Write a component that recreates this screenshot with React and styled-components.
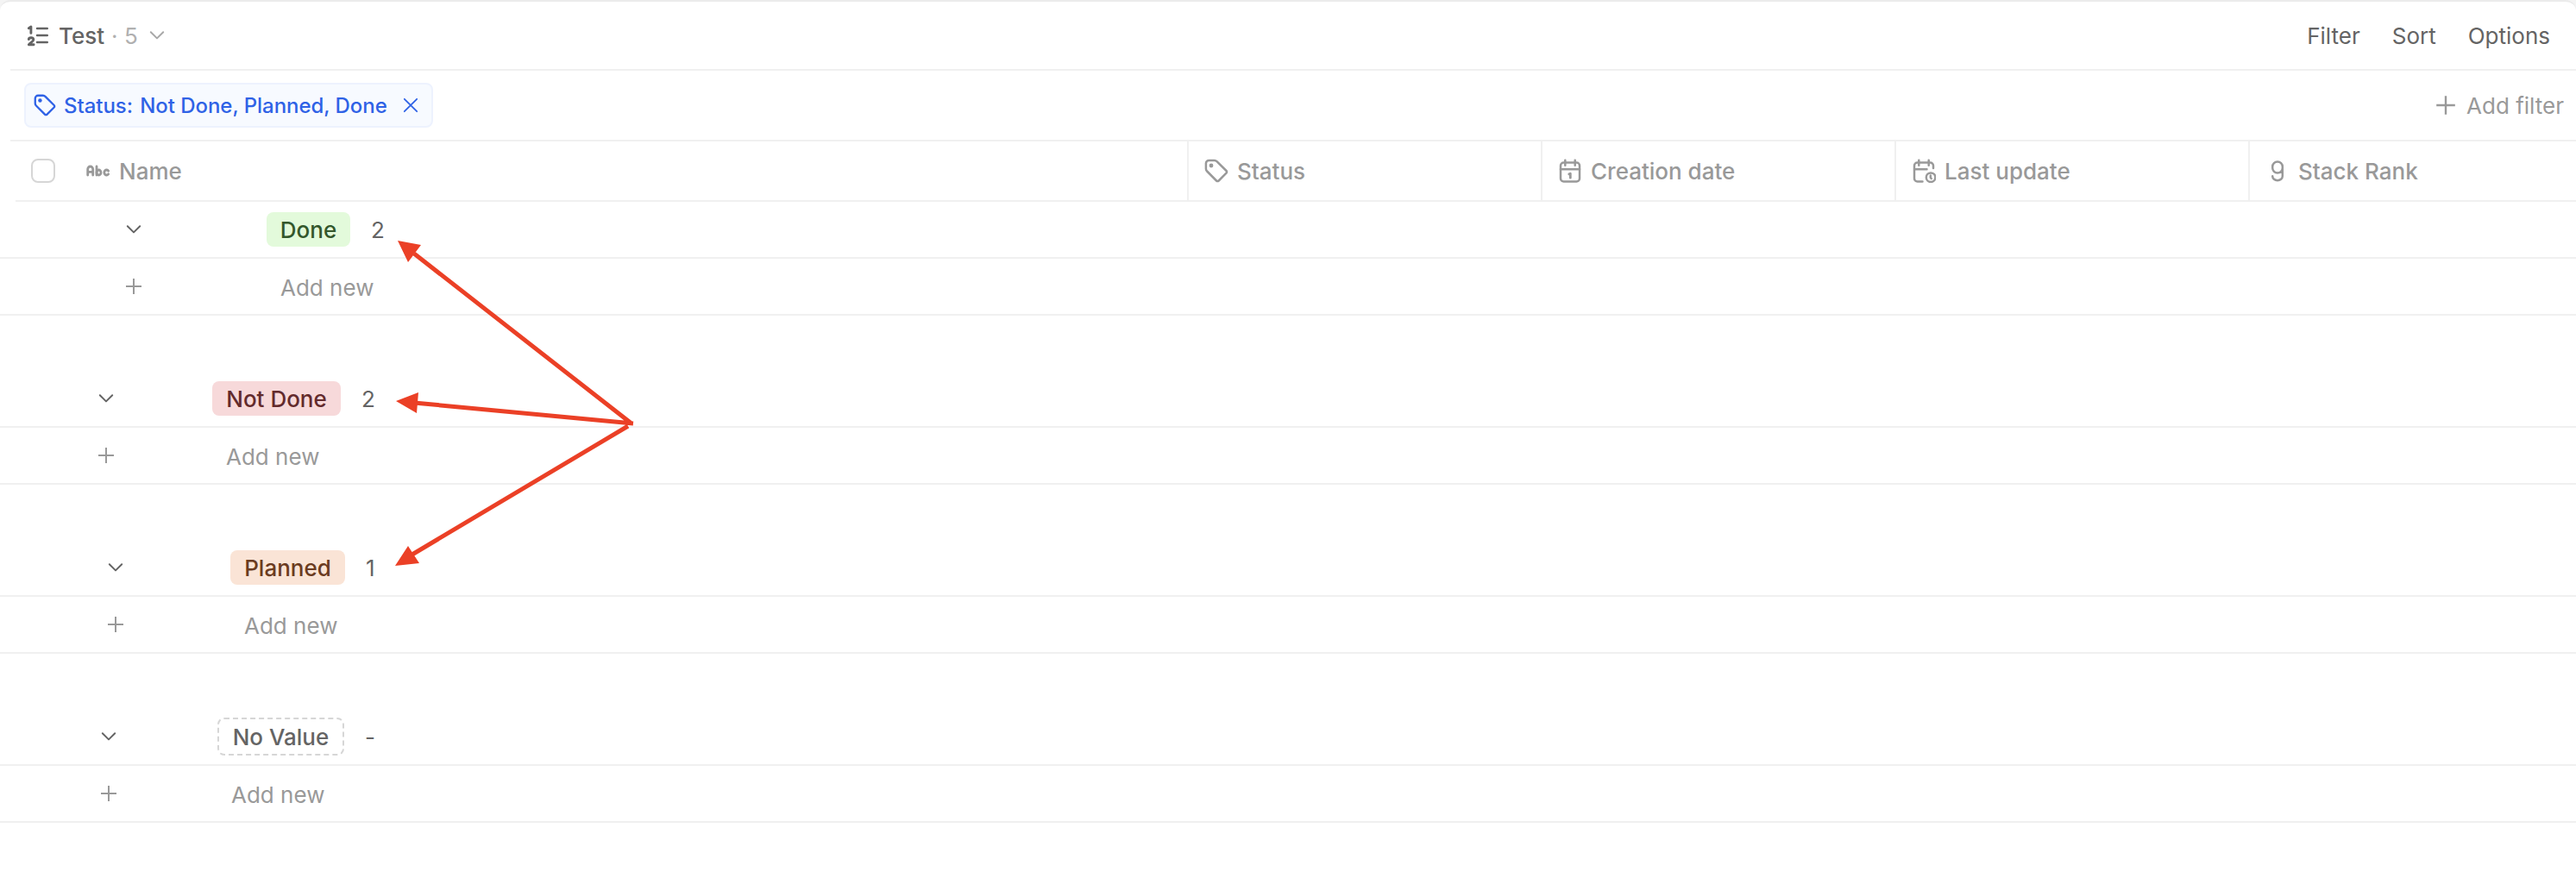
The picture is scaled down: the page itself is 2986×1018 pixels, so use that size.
import React from "react";
import styled, { createGlobalStyle } from "styled-components";

const GlobalStyle = createGlobalStyle`
  * { box-sizing: border-box; }
  body { margin: 0; background: #f4f4f4; font-family: Inter, sans-serif; }
`;

const Page = styled.div`
  position: relative;
  width: 2986px;
  height: 1018px;
  overflow: hidden;
  background: #fff;
  border-top: 2px solid #ebebeb;
  border-radius: 12px 12px 0 0;
  font-size: 26px;
  line-height: 40px;
  color: #646464;
`;

// Inter sits a little high in its line box
const Label = styled.span`
  padding-top: 2px;
  white-space: nowrap;
`;

const Toolbar = styled.header`
  display: flex;
  align-items: center;
  height: 80px;
  margin-left: 12px;
  padding: 0 30px 0 19px;
  border-bottom: 2px solid #f0f0f0;
`;

const ViewName = styled(Label)`
  margin-left: 11px;
  font-weight: 500;
`;

const ViewCount = styled(Label)`
  width: 43px;
  margin-left: 8px;
  color: #b0b0b0;
`;

const ViewMenu = styled.span`
  display: flex;
  color: #a8a8a8;
`;

const Actions = styled.nav`
  display: flex;
  gap: 37px;
  margin-left: auto;
`;

const FilterBar = styled.div`
  display: flex;
  align-items: center;
  height: 82px;
  margin-left: 12px;
  padding: 0 14px 0 16px;
  border-bottom: 2px solid #f0f0f0;
`;

const FilterChip = styled.div`
  display: flex;
  align-items: center;
  width: 474px;
  height: 52px;
  padding-left: 9px;
  border: 2px solid #edf2fe;
  border-radius: 8px;
  background: #f7faff;
  color: #2f62e6;
  font-size: 24px;
  font-weight: 500;
`;

const ChipText = styled(Label)`
  width: 375px;
  margin: 0 17px 0 9px;
  letter-spacing: -0.05px;
`;

const ChipField = styled.span`
  margin-right: 2px;
`;

const AddFilter = styled.div`
  display: flex;
  align-items: center;
  gap: 12px;
  margin-left: auto;
  color: #999;
`;

const HeaderRow = styled.div`
  display: flex;
  height: 70px;
  margin-left: 18px;
  border-bottom: 2px solid #f0f0f0;
  color: #999;
  font-weight: 500;
`;

const HeaderCell = styled.div`
  display: flex;
  align-items: center;
  flex: none;
  gap: 10px;
  width: ${(props) => props.$width}px;
  padding-left: 18px;
  border-left: ${(props) => (props.$first ? "none" : "2px solid #f0f0f0")};
`;

const Checkbox = styled.span`
  width: 28px;
  height: 28px;
  margin-right: 26px;
  border: 2px solid #d6d6d6;
  border-radius: 8px;
`;

const Group = styled.section`
  margin-bottom: 64px;
`;

const Row = styled.div`
  display: flex;
  align-items: center;
  height: 66px;
  padding-left: ${(props) => props.$indent}px;
  border-bottom: 2px solid #f0f0f0;
`;

const AddRow = styled(Row)`
  color: #999;
`;

const AddLabel = styled.span`
  margin-left: ${(props) => props.$gap}px;
  padding-top: 4px;
`;

const Badge = styled.span`
  display: flex;
  align-items: center;
  justify-content: center;
  width: ${(props) => props.$width}px;
  height: ${(props) => (props.$dashed ? 44 : 40)}px;
  margin-left: ${(props) => props.$gap}px;
  border: ${(props) => (props.$dashed ? "2px dashed #d6d6d6" : "none")};
  border-radius: 8px;
  background: ${(props) => props.$bg};
  color: ${(props) => props.$color};
  font-weight: 500;
`;

const Count = styled(Label)`
  margin-left: 24px;
`;

const Arrows = styled.svg`
  position: absolute;
  left: 450px;
  top: 268px;
`;

function Icon({ size = 28, box = size, width = 2, children }) {
  return (
    <svg width={size} height={size} viewBox={`0 0 ${box} ${box}`} fill="none" stroke="currentColor" strokeWidth={width} strokeLinecap="round" strokeLinejoin="round">
      {children}
    </svg>
  );
}

const Chevron = () => <Icon size={20}><path d="M2.8 6.2l7.2 7.2 7.2-7.2" /></Icon>;

const Plus = ({ size = 20, width = 2 }) => (
  <Icon size={size} box={20} width={width}><path d="M10 1v18M1 10h18" strokeLinecap="butt" /></Icon>
);

const Tag = ({ size = 28 }) => (
  <Icon size={size} box={28} width={2.5}>
    <path d="M1.9 5.5a3.6 3.6 0 0 1 3.6-3.6h6.2a4 4 0 0 1 2.8 1.2l11 10.900a1.9 1.9 0 0 1 0 2.7l-8.8 8.8a1.9 1.9 0 0 1-2.7 0l-10.900-11a4 4 0 0 1-1.2-2.8z" />
    <circle cx="8" cy="8" r="2.4" fill="currentColor" stroke="none" />
  </Icon>
);

const Calendar = () => (
  <Icon width={2.5}>
    <rect x="3" y="4.5" width="22" height="22" rx="3.5" />
    <path d="M3 12.3h22M8.3 1.8v6M19.7 1.8v6" />
    <path d="M12.8 17.9l1.5-.6v4.900" strokeWidth="2.8" />
  </Icon>
);

const CalendarClock = () => (
  <Icon width={2.5}>
    <path d="M12.5 26.500H6.5a3.5 3.5 0 0 1-3.5-3.500V8a3.5 3.5 0 0 1 3.5-3.500h15a3.5 3.5 0 0 1 3.5 3.500v3M3 12.300h14.500M8.300 1.800v6M19.700 1.800v6" />
    <circle cx="22.1" cy="21.7" r="5.3" />
    <path d="M21.800 19.500v2.300l.9 1.200" />
  </Icon>
);

const groups = [
  { name: "Done", count: "2", indent: 145, badge: 97, gap: 144, bg: "#e3fadb", color: "#33572b" },
  { name: "Not Done", count: "2", indent: 113, badge: 149, gap: 113, bg: "#f7d9da", color: "#632a2c" },
  { name: "Planned", count: "1", indent: 124, badge: 133, gap: 123, bg: "#fae4d6", color: "#6b3b20" },
  { name: "No Value", count: "-", indent: 116, badge: 147, gap: 116, bg: "#fff", color: "#646464", dashed: true },
];

export default function App() {
  return (
    <Page>
      <GlobalStyle />
      <Toolbar>
        <Icon size={26} width={2.4}>
          <path d="M12 5h11.8M12 13h11.8M12 21h11.8" />
          <path d="M2.3 4.7l2.6-1.6v7.3M2.3 17.6c.3-2.7 5.5-2.5 5.5.4 0 2-3.2 3.2-5.4 5.8h5.7" strokeWidth="2.9" />
        </Icon>
        <ViewName>Test</ViewName>
        <ViewCount>· 5</ViewCount>
        <ViewMenu><Chevron /></ViewMenu>
        <Actions>
          <Label>Filter</Label>
          <Label>Sort</Label>
          <Label>Options</Label>
        </Actions>
      </Toolbar>
      <FilterBar>
        <FilterChip>
          <Tag size={26} />
          <ChipText><ChipField>Status:</ChipField> Not Done, Planned, Done</ChipText>
          <Icon size={20} width={1.8}><path d="M2.8 2.8l14.4 14.4M17.2 2.8L2.8 17.2" /></Icon>
        </FilterChip>
        <AddFilter>
          <Plus size={24} />
          <Label>Add filter</Label>
        </AddFilter>
      </FilterBar>
      <HeaderRow>
        <HeaderCell $first $width={1358}>
          <Checkbox />
          <Icon width={2.8}>
            <path d="M1.7 19v-7a3 3 0 0 1 6 0v7M1.7 15.3h6M12 9v10" />
            <ellipse cx="14.5" cy="16" rx="2.5" ry="3" />
            <path d="M25.7 14.2a2.7 3 0 1 0 0 3.6" />
          </Icon>
          <Label>Name</Label>
        </HeaderCell>
        <HeaderCell $width={410}><Tag /><Label>Status</Label></HeaderCell>
        <HeaderCell $width={410}><Calendar /><Label>Creation date</Label></HeaderCell>
        <HeaderCell $width={410}><CalendarClock /><Label>Last update</Label></HeaderCell>
        <HeaderCell $width={410}>
          <Icon width={2.5}>
            <path d="M19.8 9.3a5.8 5.8 0 0 0-11.6 0v1.4a5.8 5.8 0 0 0 11.6 0zM19.8 9v11.2a5.8 5 0 0 1-11.6 0" />
          </Icon>
          <Label>Stack Rank</Label>
        </HeaderCell>
      </HeaderRow>
      {groups.map((group) => (
        <Group key={group.name}>
          <Row $indent={group.indent}>
            <Chevron />
            <Badge $width={group.badge} $gap={group.gap} $bg={group.bg} $color={group.color} $dashed={group.dashed}>
              <Label>{group.name}</Label>
            </Badge>
            <Count>{group.count}</Count>
          </Row>
          <AddRow $indent={group.indent}>
            <Plus />
            <AddLabel $gap={group.gap + 16}>Add new</AddLabel>
          </AddRow>
        </Group>
      ))}
      <Arrows width="300" height="400" viewBox="450 270 300 400" stroke="#eb4026" strokeWidth="5" fill="#eb4026">
        <path d="M732 491L480 294M734 491L480 467M728 494L476 644" />
        <path stroke="none" d="M461 279L488 284 473 304zM459 465L485 455 483 479zM458 656L473 633 486 653z" />
      </Arrows>
    </Page>
  );
}
